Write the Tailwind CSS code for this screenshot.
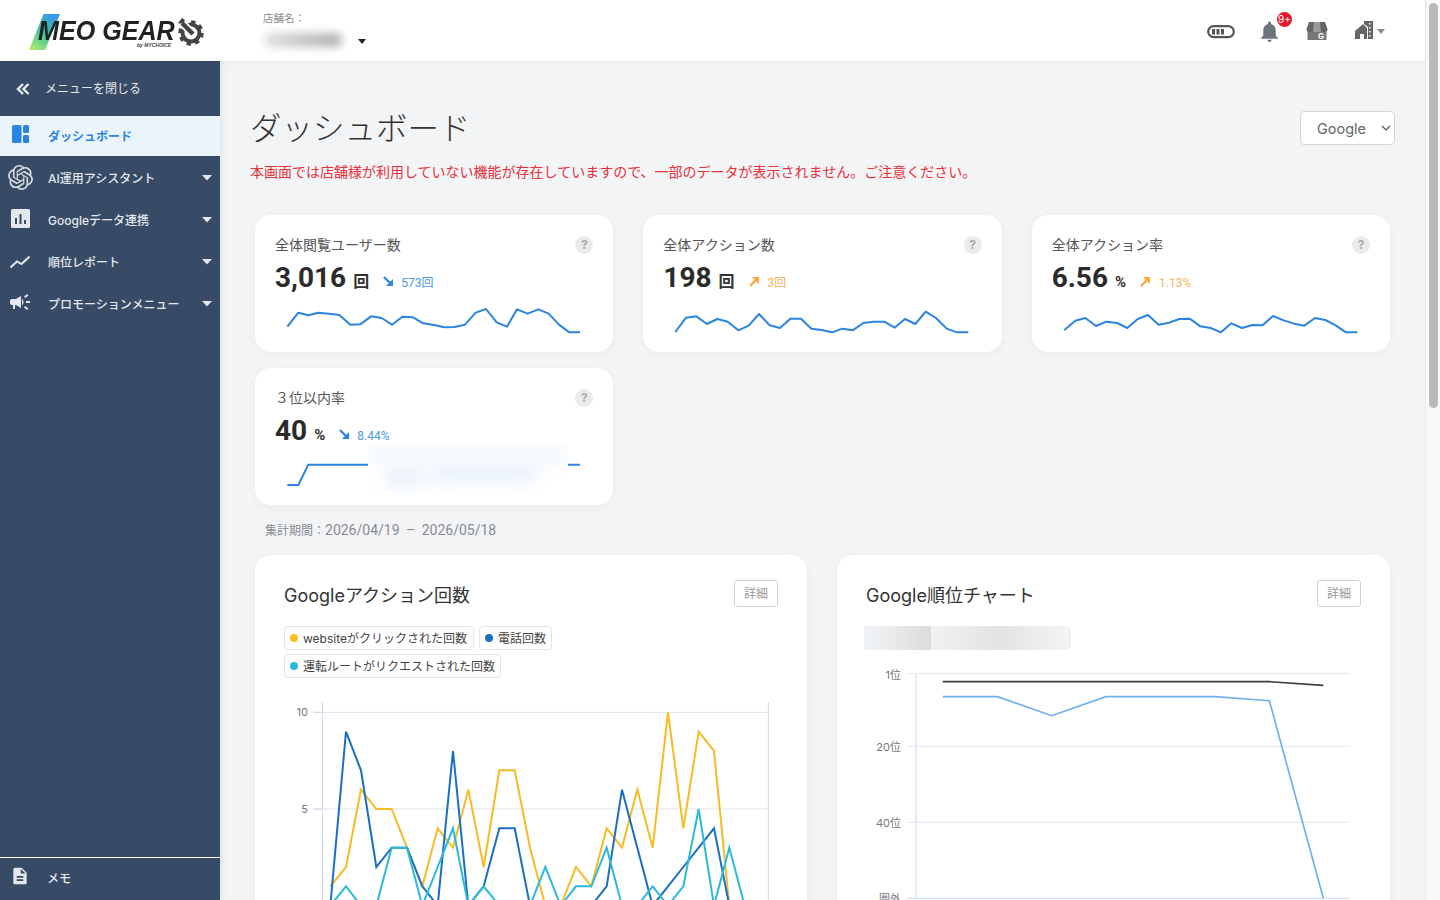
<!doctype html>
<html lang="ja">
<head>
<meta charset="utf-8">
<title>MEO GEAR</title>
<script src="https://cdn.jsdelivr.net/npm/@tailwindcss/browser@4"></script>
</head>
<body class="font-['Inter','Noto_Sans_CJK_JP',sans-serif] text-[#333] overflow-hidden">
<div class="flex h-[900px] w-[1440px] overflow-hidden bg-white">
  <div class="flex flex-col w-[1425px] h-full">
    <!-- header -->
    <header class="relative z-20 h-[61px] shrink-0 bg-white shadow-[0_1px_4px_rgba(0,0,0,0.08)] flex items-center">
      <div class="relative w-[220px] h-full shrink-0">
        <svg class="absolute left-[29px] top-[14px]" width="32" height="36" viewBox="0 0 32 36"><defs><linearGradient id="lg" x1="0.8" y1="0" x2="0.2" y2="1"><stop offset="0" stop-color="#3b96f2"/><stop offset="0.5" stop-color="#35c0a0"/><stop offset="1" stop-color="#a8e86c"/></linearGradient></defs><polygon points="14.500,0 31,0 16,36 0,36" fill="url(#lg)"/></svg>
        <span class="absolute left-[38px] top-[20px] font-['Liberation_Sans',sans-serif] italic font-bold text-[27px] leading-[22px] text-[#222] whitespace-nowrap origin-left scale-x-[0.93]">MEO GEAR</span>
        <span class="absolute left-[137px] top-[42px] font-['Liberation_Sans',sans-serif] italic font-bold text-[5px] leading-[6px] text-[#444] whitespace-nowrap">by MYCHOICE</span>
        <svg class="absolute left-[177px] top-[18px]" width="27" height="28" viewBox="0 0 27 28"><circle cx="14" cy="15" r="8.500" fill="none" stroke="#444" stroke-width="4"/><circle cx="14" cy="15" r="11" fill="none" stroke="#444" stroke-width="3.500" stroke-dasharray="4.300 4.300"/><path d="M3 3 L17 17" stroke="#fff" stroke-width="8"/><path d="M5 5 L16 16" stroke="#444" stroke-width="4.500"/><path d="M1 5 A5 5 0 0 0 8 2 L5 0 Z" fill="#444"/></svg>
      </div>
      <div class="relative h-full flex-1">
        <span class="absolute left-[43px] top-[12px] text-[10.500px] leading-[14px] text-[#8a8a8a]">店舗名：</span>
        <div class="absolute left-[44px] top-[33px] w-[78px] h-[14px] rounded-full bg-gradient-to-r from-[#e0e0e0] to-[#adadad] blur-[4px]"></div>
        <svg class="absolute left-[138px] top-[39px]" width="8" height="5" viewBox="0 0 8 5"><polygon points="0,0 8,0 4,5" fill="#222"/></svg>
      </div>
      <div class="relative h-full w-[240px] shrink-0">
        <!-- toggle -->
        <svg class="absolute left-[22px] top-[25px]" width="28" height="14" viewBox="0 0 28 14"><rect x="1.200" y="1.200" width="25.600" height="11" rx="5.500" fill="none" stroke="#555" stroke-width="2.200"/><rect x="5" y="4" width="3" height="5.500" fill="#555"/><rect x="9.500" y="4" width="3" height="5.500" fill="#555"/><rect x="14" y="4" width="3" height="5.500" fill="#555"/></svg>
        <!-- bell -->
        <svg class="absolute left-[72px] top-[19px]" width="25" height="25" viewBox="0 0 24 24"><path fill="#6c757d" d="M12 22c1.100 0 2-.9 2-2h-4c0 1.100.89 2 2 2zm6-6v-5c0-3.070-1.640-5.640-4.500-6.320V4c0-.83-.67-1.500-1.500-1.500s-1.500.67-1.500 1.500v.68C7.630 5.360 6 7.920 6 11v5l-2 2v1h16v-1l-2-2z"/></svg>
        <span class="absolute left-[92px] top-[12px] w-[15px] h-[15px] rounded-full bg-[#e8192c] text-white text-[10px] leading-[15px] text-center">9+</span>
        <!-- store -->
        <svg class="absolute left-[121px] top-[21px]" width="22" height="20" viewBox="0 0 22 20"><rect x="1.500" y="9" width="19" height="10" fill="#777"/><path fill="#666" d="M3 1 H19 L21.500 8 Q21.500 11 18.500 11 H3.500 Q.5 11 .5 8 Z"/><path fill="#9a9a9a" d="M8 1 H14 L15 11 H7 Z"/><text x="15" y="18" text-anchor="middle" font-size="8" font-weight="700" fill="#fff">G</text></svg>
        <!-- house -->
        <svg class="absolute left-[170px] top-[20px]" width="20" height="20" viewBox="0 0 20 20"><path fill="#666" d="M8 4 L0 11 V19 H5 V14 H9 V19 H12 V8 Z"/><path fill="#666" d="M9 1 H18 V19 H13 V7 L9 4 Z"/><path fill="#fff" d="M14 3 H15.500 V4.500 H14 Z M14 7 H15.500 V8.500 H14 Z M14 11 H15.500 V12.500 H14 Z M14 15 H15.500 V16.500 H14 Z"/></svg>
        <svg class="absolute left-[192px] top-[29px]" width="8" height="5" viewBox="0 0 8 5"><polygon points="0,0 8,0 4,5" fill="#888"/></svg>
      </div>
    </header>
    <div class="flex flex-1 min-h-0">
      <!-- sidebar -->
      <aside class="relative z-10 w-[220px] shrink-0 bg-[#384b66] flex flex-col text-[#e4e7ec] text-[12px] shadow-[2px_0_6px_rgba(0,0,0,0.08)]">
        <div class="h-[55px] flex items-center shrink-0">
          <svg class="ml-[16px] mr-[15px]" width="14" height="14" viewBox="0 0 14 14"><path d="M7 2 L2 7 L7 12 M12.500 2 L7.500 7 L12.500 12" fill="none" stroke="#e8ebf0" stroke-width="2.400"/></svg>
          <span>メニューを閉じる</span>
        </div>
        <div class="h-[40px] flex items-center bg-[#ebf3fb] text-[#2a84e0] font-bold shrink-0">
          <svg class="ml-[11px] mr-[18px] -mt-[4px]" width="19" height="19" viewBox="0 0 19 19"><rect x="1" y="0" width="9.500" height="18" rx="1.500" fill="#2a84e0"/><rect x="12" y="0" width="6" height="8" rx="1.500" fill="#2a84e0"/><rect x="12" y="10" width="6" height="8" rx="1.500" fill="#2a84e0"/></svg>
          <span class="pt-[2px]">ダッシュボード</span>
        </div>
        <div class="h-[1px] shrink-0"></div>
        <div class="h-[42px] flex items-center shrink-0 font-medium">
          <svg class="ml-[8px] mr-[15px] -mt-[2px]" width="25" height="25" viewBox="0 0 24 24"><path fill="#d7dbe2" d="M22.2819 9.8211a5.9847 5.9847 0 0 0-.5157-4.9108 6.0462 6.0462 0 0 0-6.5098-2.9A6.0651 6.0651 0 0 0 4.9807 4.1818a5.9847 5.9847 0 0 0-3.9977 2.9 6.0462 6.0462 0 0 0 .7427 7.0966 5.98 5.98 0 0 0 .511 4.9107 6.051 6.051 0 0 0 6.5146 2.9001A5.9847 5.9847 0 0 0 13.2599 24a6.0557 6.0557 0 0 0 5.7718-4.2058 5.9894 5.9894 0 0 0 3.9977-2.9001 6.0557 6.0557 0 0 0-.7475-7.0729zm-9.022 12.6081a4.4755 4.4755 0 0 1-2.8764-1.0408l.1419-.0804 4.7783-2.7582a.7948.7948 0 0 0 .3927-.6813v-6.7369l2.02 1.1686a.071.071 0 0 1 .038.052v5.5826a4.504 4.504 0 0 1-4.4945 4.4944zm-9.6607-4.1254a4.4708 4.4708 0 0 1-.5346-3.0137l.142.0852 4.783 2.7582a.7712.7712 0 0 0 .7806 0l5.8428-3.3685v2.3324a.0804.0804 0 0 1-.0332.0615L9.74 19.9502a4.4992 4.4992 0 0 1-6.1408-1.6464zM2.3408 7.8956a4.485 4.485 0 0 1 2.3655-1.9728V11.6a.7664.7664 0 0 0 .3879.6765l5.8144 3.3543-2.0201 1.1685a.0757.0757 0 0 1-.071 0l-4.8303-2.7865A4.504 4.504 0 0 1 2.3408 7.872zm16.5963 3.8558L13.1038 8.364 15.1192 7.2a.0757.0757 0 0 1 .071 0l4.8303 2.7913a4.4944 4.4944 0 0 1-.6765 8.1042v-5.6772a.79.79 0 0 0-.407-.667zm2.0107-3.0231l-.142-.0852-4.7735-2.7818a.7759.7759 0 0 0-.7854 0L9.409 9.2297V6.8974a.0662.0662 0 0 1 .0284-.0615l4.8303-2.7866a4.4992 4.4992 0 0 1 6.6802 4.66zM8.3065 12.863l-2.02-1.1638a.0804.0804 0 0 1-.038-.0567V6.0742a4.4992 4.4992 0 0 1 7.3757-3.4537l-.142.0805L8.704 5.459a.7948.7948 0 0 0-.3927.6813zm1.0976-2.3654l2.602-1.4998 2.6069 1.4998v2.9994l-2.5974 1.4997-2.6067-1.4997Z"/></svg>
          <span class="flex-1 pt-[2px]">AI運用アシスタント</span>
          <svg class="mr-[8px]" width="10" height="6" viewBox="0 0 10 6"><polygon points="0,0 10,0 5,5.500" fill="#e4e7ec"/></svg>
        </div>
        <div class="h-[42px] flex items-center shrink-0 font-medium">
          <svg class="ml-[11px] mr-[18px] -mt-[4px]" width="19" height="19" viewBox="0 0 19 19"><rect width="19" height="19" rx="1.500" fill="#e4e7ec"/><path d="M4 9 H6 V15 H4 Z M8.500 5 H10.500 V15 H8.500 Z M13 11 H15 V15 H13 Z" fill="#384b66"/></svg>
          <span class="flex-1 pt-[2px]">Googleデータ連携</span>
          <svg class="mr-[8px]" width="10" height="6" viewBox="0 0 10 6"><polygon points="0,0 10,0 5,5.500" fill="#e4e7ec"/></svg>
        </div>
        <div class="h-[42px] flex items-center shrink-0 font-medium">
          <svg class="ml-[10px] mr-[18px]" width="20" height="14" viewBox="0 0 20 14"><path d="M0.500 12.500 L7 6.500 L11.500 9 L19.500 1.500" fill="none" stroke="#e4e7ec" stroke-width="2"/></svg>
          <span class="flex-1 pt-[2px]">順位レポート</span>
          <svg class="mr-[8px]" width="10" height="6" viewBox="0 0 10 6"><polygon points="0,0 10,0 5,5.500" fill="#e4e7ec"/></svg>
        </div>
        <div class="h-[42px] flex items-center shrink-0 font-medium">
          <svg class="ml-[8px] mr-[16px] -mt-[4px]" width="24" height="24" viewBox="0 0 24 24"><path fill="#e4e7ec" d="M18 11v2h4v-2h-4zm-2 6.610c.96.71 2.210 1.650 3.200 2.390.4-.53.8-1.070 1.200-1.600-.99-.74-2.240-1.680-3.200-2.400-.4.54-.8 1.080-1.200 1.610zM20.400 5.600c-.4-.53-.8-1.070-1.200-1.600-.99.74-2.240 1.680-3.200 2.400.4.53.8 1.070 1.200 1.600.96-.72 2.210-1.650 3.200-2.400zM4 9c-1.100 0-2 .9-2 2v2c0 1.100.9 2 2 2h1v4h2v-4h1l5 3V6L8 9H4zm11.500 3c0-1.330-.58-2.530-1.500-3.350v6.690c.92-.81 1.500-2.010 1.500-3.340z"/></svg>
          <span class="flex-1 pt-[2px]">プロモーションメニュー</span>
          <svg class="mr-[8px]" width="10" height="6" viewBox="0 0 10 6"><polygon points="0,0 10,0 5,5.500" fill="#e4e7ec"/></svg>
        </div>
        <div class="flex-1"></div>
        <div class="h-[43px] border-t border-white flex items-center shrink-0 font-medium">
          <svg class="ml-[10px] mr-[18px] -mt-[6px]" width="20" height="20" viewBox="0 0 24 24"><path fill="#e4e7ec" d="M14 2H6c-1.100 0-1.990.9-1.990 2L4 20c0 1.100.89 2 1.990 2H18c1.100 0 2-.9 2-2V8l-6-6zm2 16H8v-2h8v2zm0-4H8v-2h8v2zm-3-5V3.500L18.500 9H13z"/></svg>
          <span class="-ml-px">メモ</span>
        </div>
      </aside>
      <!-- main -->
      <main class="flex-1 min-w-0 bg-[#f3f4f6] overflow-hidden pt-[47px] pl-[30px] pr-[30px]">
        <div class="flex items-center justify-between h-[40px]">
          <h1 class="text-[31.500px] leading-[40px] pt-[2px] font-light text-[#333]">ダッシュボード</h1>
          <div class="w-[95px] h-[34px] bg-white border border-[#d3d5d9] rounded-[4px] flex items-center justify-between pl-[16px] pr-[3px] text-[14.500px] text-[#666]">
            <span class="pt-[1px]">Google</span>
            <svg width="10" height="6" viewBox="0 0 10 6"><path d="M1 1 L5 5 L9 1" fill="none" stroke="#555" stroke-width="1.200"/></svg>
          </div>
        </div>
        <p class="mt-[14px] text-[14px] leading-[20px] text-[#e8303a] whitespace-nowrap">本画面では店舗様が利用していない機能が存在していますので、一部のデータが表示されません。ご注意ください。</p>

        <div class="mx-[5px] mt-[33px] grid grid-cols-3 gap-x-[30px] gap-y-[16px]">
          <!-- card 1 -->
          <section class="h-[137px] bg-white rounded-[16px] shadow-[0_2px_10px_rgba(0,0,0,0.04)] pt-[20px]">
            <div class="flex items-center justify-between px-[20px] h-[20px]">
              <span class="text-[14px] text-[#555] -mt-[2px]">全体閲覧ユーザー数</span>
              <span class="w-[18px] h-[18px] rounded-full bg-[#ebebed] text-[#aaa] text-[12px] font-bold leading-[18px] text-center">?</span>
            </div>
            <div class="flex items-baseline px-[20px] h-[32px] mt-[7px] font-['Roboto','Noto_Sans_CJK_JP',sans-serif]">
              <span class="text-[28px] font-bold text-[#2b2b2b] leading-[32px]">3,016</span>
              <span class="ml-[7px] text-[16px] font-bold text-[#333]">回</span>
              <svg class="ml-[14px] mr-[7px]" width="11" height="11" viewBox="0 0 11 11"><path d="M1 1 L7.500 7.500" fill="none" stroke="#2a84e0" stroke-width="2.200"/><polygon points="10,3 10,10 3,10" fill="#2a84e0"/></svg>
              <span class="text-[12px] text-[#4a98e6]">573回</span>
            </div>
            <svg class="block mt-[6px] w-full h-[40px]" viewBox="15 270 1075 120"><polyline fill="none" stroke="#2a84e0" stroke-width="6" stroke-linejoin="round" points="112,350 145,308 175,316 205,308 237,311 268,315 301,344 331,343 363,319 395,324 426,344 457,320 489,322 520,340 552,345 583,352 613,351 645,344 677,308 708,297 740,337 771,350 801,298 833,311 865,298 896,311 927,344 958,367 990,367"/></svg>
          </section>
          <!-- card 2 -->
          <section class="h-[137px] bg-white rounded-[16px] shadow-[0_2px_10px_rgba(0,0,0,0.04)] pt-[20px]">
            <div class="flex items-center justify-between px-[20px] h-[20px]">
              <span class="text-[14px] text-[#555] -mt-[2px]">全体アクション数</span>
              <span class="w-[18px] h-[18px] rounded-full bg-[#ebebed] text-[#aaa] text-[12px] font-bold leading-[18px] text-center">?</span>
            </div>
            <div class="flex items-baseline px-[20px] h-[32px] mt-[7px] font-['Roboto','Noto_Sans_CJK_JP',sans-serif]">
              <span class="text-[28px] font-bold text-[#2b2b2b] leading-[32px]">198</span>
              <span class="ml-[7px] text-[16px] font-bold text-[#333]">回</span>
              <svg class="ml-[14px] mr-[8px]" width="11" height="11" viewBox="0 0 11 11"><path d="M1 10 L7.500 3.500" fill="none" stroke="#f9a63a" stroke-width="2.200"/><polygon points="3,1 10,1 10,8" fill="#f9a63a"/></svg>
              <span class="text-[12px] text-[#fbb05a]">3回</span>
            </div>
            <svg class="block mt-[6px] w-full h-[40px]" viewBox="11 270 1075 120"><polyline fill="none" stroke="#2a84e0" stroke-width="6" stroke-linejoin="round" points="108,366 140,323 171,319 203,342 234,327 265,335 297,361 328,347 359,312 391,346 422,354 453,326 485,326 516,356 547,360 578,367 609,356 640,361 672,339 703,335 735,335 766,353 797,327 828,342 859,305 890,324 922,356 953,367 987,367"/></svg>
          </section>
          <!-- card 3 -->
          <section class="h-[137px] bg-white rounded-[16px] shadow-[0_2px_10px_rgba(0,0,0,0.04)] pt-[20px]">
            <div class="flex items-center justify-between px-[20px] h-[20px]">
              <span class="text-[14px] text-[#555] -mt-[2px]">全体アクション率</span>
              <span class="w-[18px] h-[18px] rounded-full bg-[#ebebed] text-[#aaa] text-[12px] font-bold leading-[18px] text-center">?</span>
            </div>
            <div class="flex items-baseline px-[20px] h-[32px] mt-[7px] font-['Roboto','Noto_Sans_CJK_JP',sans-serif]">
              <span class="text-[28px] font-bold text-[#2b2b2b] leading-[32px]">6.56</span>
              <span class="ml-[7px] text-[15px] font-bold text-[#333]">%</span>
              <svg class="ml-[14px] mr-[8px]" width="11" height="11" viewBox="0 0 11 11"><path d="M1 10 L7.500 3.500" fill="none" stroke="#f9a63a" stroke-width="2.200"/><polygon points="3,1 10,1 10,8" fill="#f9a63a"/></svg>
              <span class="text-[12px] text-[#fbb05a]">1.13%</span>
            </div>
            <svg class="block mt-[6px] w-full h-[40px]" viewBox="20 270 1075 120"><polyline fill="none" stroke="#2a84e0" stroke-width="6" stroke-linejoin="round" points="117,360 150,332 180,324 212,348 243,335 275,339 306,354 337,327 368,315 400,344 431,338 462,327 493,326 525,349 556,354 587,367 618,340 650,354 681,345 712,346 743,318 775,331 806,341 837,347 869,324 900,330 931,346 962,367 996,367"/></svg>
          </section>
          <!-- card 4 -->
          <section class="relative h-[137px] bg-white rounded-[16px] shadow-[0_2px_10px_rgba(0,0,0,0.04)] pt-[20px]">
            <div class="flex items-center justify-between px-[20px] h-[20px]">
              <span class="text-[14px] text-[#555] -mt-[2px]">３位以内率</span>
              <span class="w-[18px] h-[18px] rounded-full bg-[#ebebed] text-[#aaa] text-[12px] font-bold leading-[18px] text-center">?</span>
            </div>
            <div class="flex items-baseline px-[20px] h-[32px] mt-[7px] font-['Roboto','Noto_Sans_CJK_JP',sans-serif]">
              <span class="text-[28px] font-bold text-[#2b2b2b] leading-[32px]">40</span>
              <span class="ml-[7px] text-[15px] font-bold text-[#333]">%</span>
              <svg class="ml-[14px] mr-[7px]" width="11" height="11" viewBox="0 0 11 11"><path d="M1 1 L7.500 7.500" fill="none" stroke="#2a84e0" stroke-width="2.200"/><polygon points="10,3 10,10 3,10" fill="#2a84e0"/></svg>
              <span class="text-[12px] text-[#4a98e6]">8.44%</span>
            </div>
            <svg class="block mt-[6px] w-full h-[40px]" viewBox="15 265 1075 120"><polyline fill="none" stroke="#2a84e0" stroke-width="6" points="112,361 145,361 175,300 990,300"/></svg>
            <div class="absolute left-[113px] top-[77px] w-[200px] h-[50px] bg-white overflow-hidden">
              <div class="absolute left-[14px] top-[16px] w-[44px] h-[28px] rounded-full bg-[#edf4fc] blur-[9px]"></div>
              <div class="absolute left-[60px] top-[14px] w-[110px] h-[24px] rounded-full bg-[#e9f1fb] blur-[9px]"></div>
              <div class="absolute left-[0px] top-[0px] w-[200px] h-[20px] bg-[#f6f9fd] blur-[6px]"></div>
            </div>
          </section>
        </div>

        <p class="ml-[15px] mt-[15px] h-[20px] leading-[20px] text-[#888c92] font-['Roboto','Noto_Sans_CJK_JP',sans-serif] text-[14px]"><span class="text-[12px]">集計期間：</span>2026/04/19<span class="mx-[3px]"> – </span>2026/05/18</p>

        <div class="mx-[5px] mt-[15px] flex gap-x-[30px]">
          <!-- chart 1 -->
          <section class="w-[552px] h-[420px] shrink-0 bg-white rounded-[16px] shadow-[0_2px_10px_rgba(0,0,0,0.04)] pt-[26px]">
            <div class="flex items-center justify-between px-[29px] h-[28px]">
              <h2 class="text-[18px] text-[#333]">Googleアクション回数</h2>
              <span class="w-[44px] h-[27px] -mt-[3px] border border-[#d0d2d6] rounded-[3px] text-[12px] leading-[25px] text-center text-[#999]">詳細</span>
            </div>
            <div class="mt-[17px] px-[29px] flex flex-col gap-y-[4px] text-[12px] text-[#444]">
              <div class="flex gap-x-[5px]">
                <div class="h-[24px] w-[190px] border border-[#e3e4e7] rounded-[4px] flex items-center pl-[5px] gap-x-[5px]"><span class="w-[8px] h-[8px] rounded-full bg-[#f9bf26]"></span><span class="pt-[1px]">websiteがクリックされた回数</span></div>
                <div class="h-[24px] w-[73px] border border-[#e3e4e7] rounded-[4px] flex items-center pl-[5px] gap-x-[5px]"><span class="w-[8px] h-[8px] rounded-full bg-[#1a6fc0]"></span><span class="pt-[1px]">電話回数</span></div>
              </div>
              <div class="flex">
                <div class="h-[24px] w-[217px] border border-[#e3e4e7] rounded-[4px] flex items-center pl-[5px] gap-x-[5px]"><span class="w-[8px] h-[8px] rounded-full bg-[#2cb9d8]"></span><span class="pt-[1px]">運転ルートがリクエストされた回数</span></div>
              </div>
            </div>
            <svg class="block mt-[12px]" width="552" height="260" viewBox="-45 360 1656 780">
              <path d="M157 397 V1140 M1495 397 V1140" stroke="#c7d6ec" stroke-width="3" fill="none"/>
              <path d="M130 427 H1495 M130 717 H1495" stroke="#dfe4ec" stroke-width="3" fill="none"/>
              <path d="M130 427 H157 M130 717 H157" stroke="#c7d6ec" stroke-width="3" fill="none"/>
              <text x="114" y="438" text-anchor="end" font-size="33" fill="#777">10</text>
              <text x="114" y="728" text-anchor="end" font-size="33" fill="#777">5</text>
              <polyline fill="none" stroke="#f7bc24" stroke-width="6" points="181,949 228,891 273,659 319,717 365,717 411,833 457,949 503,775 549,833 595,659 641,891 688,601 734,601 780,833 826,1007 872,1007 918,891 964,949 1010,775 1056,833 1102,659 1148,833 1194,427 1240,775 1286,485 1332,543 1378,1007 1424,1007"/>
              <polyline fill="none" stroke="#1a6fc0" stroke-width="6" points="181,1007 228,485 273,601 319,891 365,833 411,833 457,949 503,1007 549,543 595,1007 641,949 688,775 734,775 780,1007 826,1007 872,1007 918,1007 964,1007 1010,949 1056,659 1102,833 1148,1007 1194,949 1240,891 1286,833 1332,775 1378,1007 1424,1007"/>
              <polyline fill="none" stroke="#2cb9d8" stroke-width="6" points="181,1007 228,949 273,1007 319,1007 365,833 411,833 457,1007 503,891 549,775 595,1007 641,949 688,1007 734,1007 780,1007 826,891 872,1007 918,949 964,949 1010,833 1056,1007 1102,1007 1148,949 1194,1007 1240,949 1286,717 1332,1007 1378,833 1424,1007"/>
            </svg>
          </section>
          <!-- chart 2 -->
          <section class="w-[553px] h-[420px] shrink-0 bg-white rounded-[16px] shadow-[0_2px_10px_rgba(0,0,0,0.04)] pt-[26px]">
            <div class="flex items-center justify-between px-[29px] h-[28px]">
              <h2 class="text-[18px] text-[#333]">Google順位チャート</h2>
              <span class="w-[44px] h-[27px] -mt-[3px] border border-[#d0d2d6] rounded-[3px] text-[12px] leading-[25px] text-center text-[#999]">詳細</span>
            </div>
            <div class="mt-[17px] ml-[27px] w-[206px] h-[24px] rounded-r-[4px] border-r border-[#e3e4e7] overflow-hidden flex">
              <div class="h-full w-[67px] bg-gradient-to-r from-[#f1f4f7] to-[#dcdcdc]"></div>
              <div class="h-full flex-1 bg-gradient-to-r from-[#f1f1f1] via-[#e3e3e3] to-[#f4f4f4]"></div>
            </div>
            <svg class="block mt-[10px]" width="553" height="260" viewBox="-39 270 1659 780">
              <path d="M170 310 H1500 M170 529 H1500 M170 757 H1500" stroke="#e2e6ec" stroke-width="3" fill="none"/>
              <path d="M170 985 H1500" stroke="#c7d9f2" stroke-width="3" fill="none"/>
              <path d="M198 310 V985" stroke="#dfe8f6" stroke-width="5" fill="none"/>
              <text x="153" y="326" text-anchor="end" font-size="33" fill="#777">1位</text>
              <text x="153" y="542" text-anchor="end" font-size="33" fill="#777">20位</text>
              <text x="153" y="770" text-anchor="end" font-size="33" fill="#777">40位</text>
              <text x="153" y="998" text-anchor="end" font-size="33" fill="#777">圏外</text>
              <polyline fill="none" stroke="#3d3d3d" stroke-width="5" points="278,335 1258,335 1420,346"/>
              <polyline fill="none" stroke="#6fb0ee" stroke-width="5" points="278,380 442,380 605,437 768,380 1095,380 1258,392 1420,985"/>
            </svg>
          </section>
        </div>
      </main>
    </div>
  </div>
  <!-- scrollbar -->
  <div class="w-[15px] h-full shrink-0 bg-[#fafafa] border-l border-[#e8e8e8] pt-[3px] pl-[3px]">
    <div class="w-[9px] h-[405px] rounded-full bg-[#b9b9b9]"></div>
  </div>
</div>
</body>
</html>
